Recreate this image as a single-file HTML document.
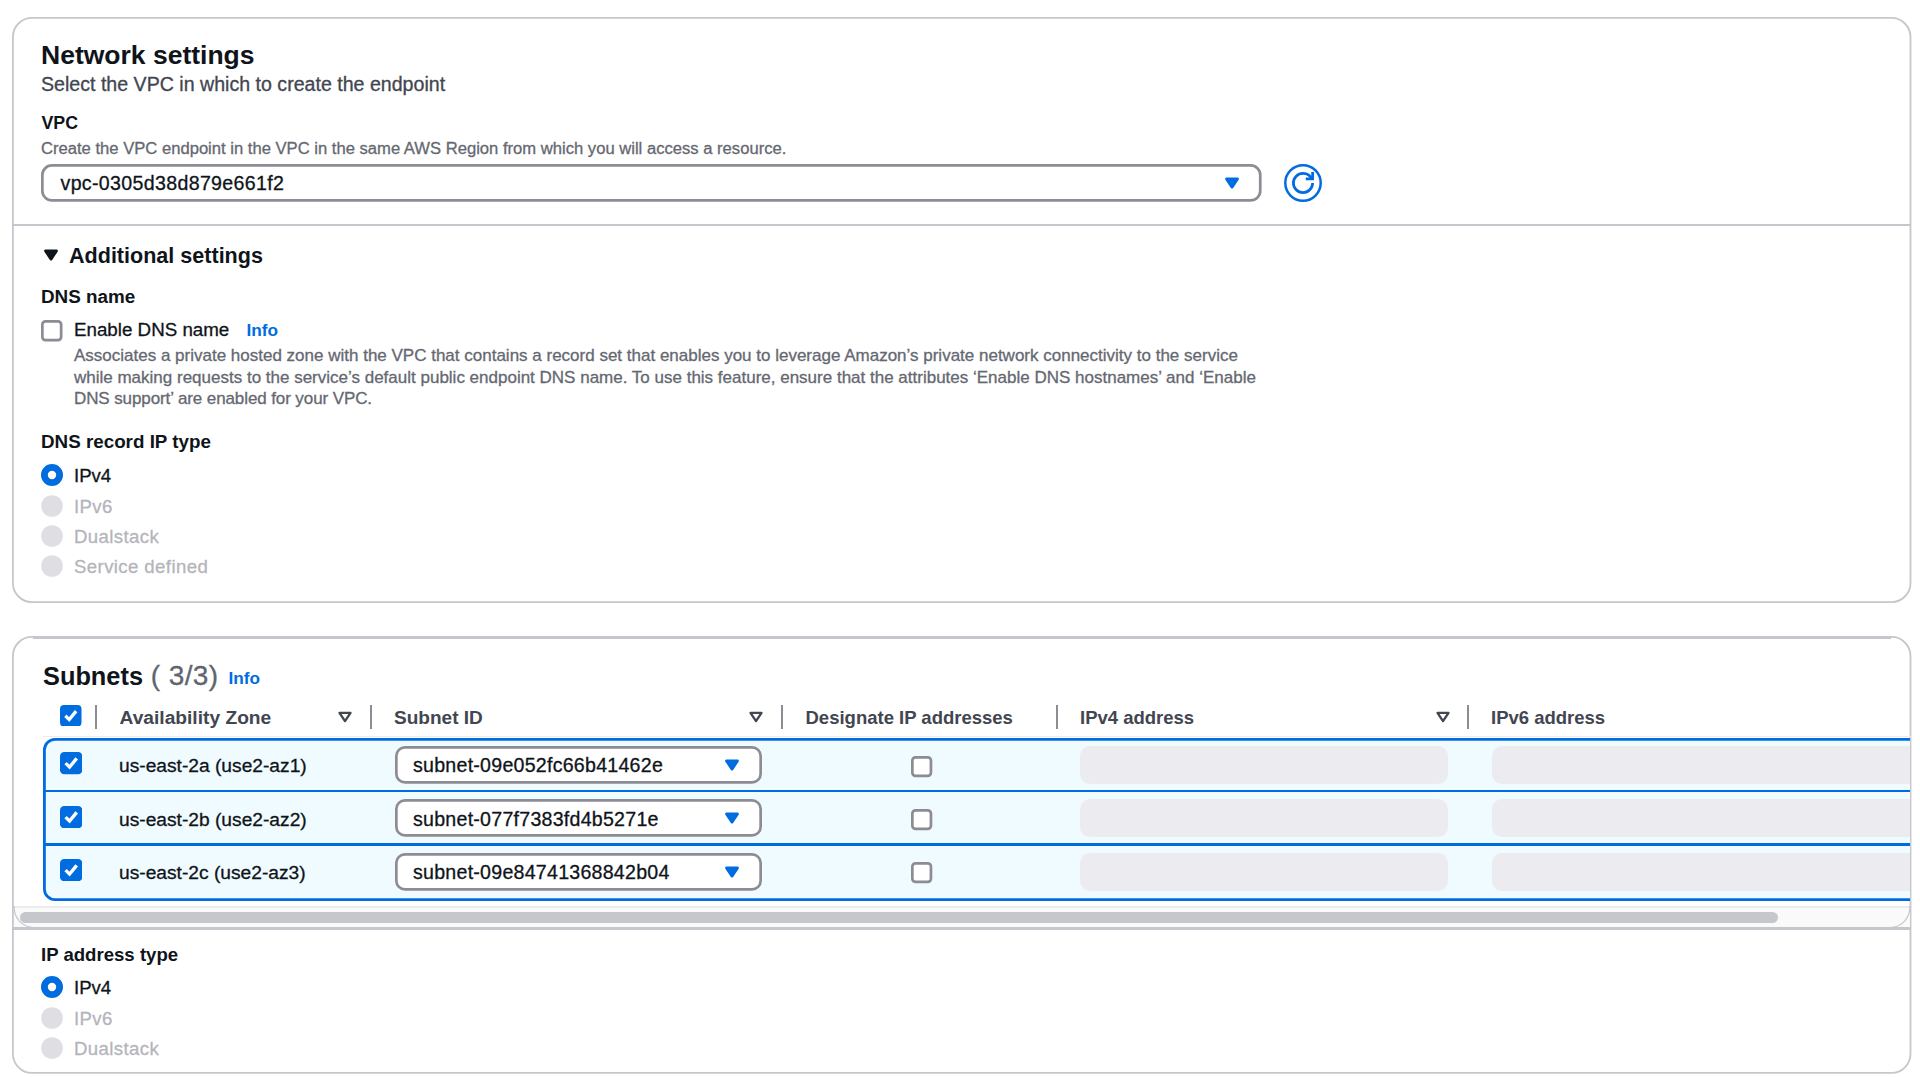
<!DOCTYPE html>
<html><head><meta charset="utf-8"><style>
html,body{margin:0;padding:0;background:#fff;width:1920px;height:1077px;overflow:hidden}
body{position:relative;font-family:"Liberation Sans",sans-serif}
.t{position:absolute;white-space:nowrap}
.b{position:absolute}
</style></head><body>
<svg class="b" style="left:12.3px;top:17px;overflow:visible" width="1899.4" height="586"><rect x="0.9" y="0.9" width="1897.6000000000001" height="584.2" rx="19.1" fill="#fff" stroke="#c6c6cd" stroke-width="1.8"/></svg>
<div class="t" style="left:41px;top:41.57px;font-size:26.5px;line-height:26.5px;font-weight:700;color:#0f141a;">Network settings</div>
<div class="t" style="left:41px;top:75.21px;font-size:19.6px;line-height:19.6px;font-weight:400;color:#424650;-webkit-text-stroke:0.3px currentColor;">Select the VPC in which to create the endpoint</div>
<div class="t" style="left:41.5px;top:115.13px;font-size:17.8px;line-height:17.8px;font-weight:700;color:#0f141a;">VPC</div>
<div class="t" style="left:41px;top:140.52px;font-size:16.63px;line-height:16.63px;font-weight:400;color:#656871;-webkit-text-stroke:0.3px currentColor;">Create the VPC endpoint in the VPC in the same AWS Region from which you will access a resource.</div>
<svg class="b" style="left:41.2px;top:164px;overflow:visible" width="1220.6" height="37.8"><rect x="1.35" y="1.35" width="1217.8999999999999" height="35.099999999999994" rx="9.65" fill="#fff" stroke="#8c8c94" stroke-width="2.7"/></svg>
<div class="t" style="left:60.5px;top:173.51px;font-size:19.6px;line-height:19.6px;font-weight:400;color:#0f141a;letter-spacing:0.33px;-webkit-text-stroke:0.3px currentColor;">vpc-0305d38d879e661f2</div>
<svg class="b" style="left:1221.00px;top:172.00px" width="22.00" height="22.00" viewBox="0 0 16 16"><path d="M4 5h8l-4 6-4-6z" fill="#006ce0" stroke="#006ce0" stroke-width="2" stroke-linejoin="round"/></svg>
<svg class="b" style="left:1280px;top:160px" width="46" height="46" viewBox="1280 160 46 46"><circle cx="1303" cy="183" r="17.7" fill="none" stroke="#006ce0" stroke-width="2.5"/><g transform="translate(1292,172) scale(1.375)"><path d="M10 5h5V0" fill="none" stroke="#006ce0" stroke-width="2"/><path d="M15 8a6.99 6.99 0 0 1-7 7 6.99 6.99 0 0 1-7-7 6.99 6.99 0 0 1 7-7 6.876 6.876 0 0 1 6.41 4.17" fill="none" stroke="#006ce0" stroke-width="2"/></g></svg>
<div class="b" style="left:13px;top:224px;width:1898px;height:2px;background:#c6c6cd"></div>
<svg class="b" style="left:40px;top:244px" width="22" height="22" viewBox="0 0 16 16"><path d="M4 5h8l-4 6-4-6z" fill="#0f141a" stroke="#0f141a" stroke-width="2" stroke-linejoin="round"/></svg>
<div class="t" style="left:69px;top:245.06px;font-size:21.55px;line-height:21.55px;font-weight:700;color:#0f141a;">Additional settings</div>
<div class="t" style="left:41px;top:288.33px;font-size:18.87px;line-height:18.87px;font-weight:700;color:#0f141a;">DNS name</div>
<svg class="b" style="left:41px;top:319.5px;overflow:visible" width="21.5" height="21.5"><rect x="1.35" y="1.35" width="18.8" height="18.8" rx="3.15" fill="#fff" stroke="#8c8c94" stroke-width="2.7"/></svg>
<div class="t" style="left:74px;top:320.73px;font-size:18.75px;line-height:18.75px;font-weight:400;color:#0f141a;-webkit-text-stroke:0.3px currentColor;">Enable DNS name</div>
<div class="t" style="left:246.5px;top:322.44px;font-size:17.2px;line-height:17.2px;font-weight:700;color:#006ce0;">Info</div>
<div class="t" style="left:74px;top:346.91px;font-size:17.0px;line-height:17.0px;font-weight:400;color:#656871;-webkit-text-stroke:0.3px currentColor;">Associates a private hosted zone with the VPC that contains a record set that enables you to leverage Amazon’s private network connectivity to the service</div>
<div class="t" style="left:74px;top:368.61px;font-size:17.0px;line-height:17.0px;font-weight:400;color:#656871;-webkit-text-stroke:0.3px currentColor;">while making requests to the service’s default public endpoint DNS name. To use this feature, ensure that the attributes ‘Enable DNS hostnames’ and ‘Enable</div>
<div class="t" style="left:74px;top:390.31px;font-size:17.0px;line-height:17.0px;font-weight:400;color:#656871;letter-spacing:-0.1px;-webkit-text-stroke:0.3px currentColor;">DNS support’ are enabled for your VPC.</div>
<div class="t" style="left:41px;top:432.68px;font-size:18.81px;line-height:18.81px;font-weight:700;color:#0f141a;">DNS record IP type</div>
<svg class="b" style="left:41px;top:464.2px" width="22" height="22" viewBox="0 0 22 22"><circle cx="11" cy="11" r="7.6" fill="#fff" stroke="#006ce0" stroke-width="6.8"/></svg>
<div class="t" style="left:74px;top:467.26px;font-size:18.6px;line-height:18.6px;font-weight:400;color:#0f141a;-webkit-text-stroke:0.3px currentColor;">IPv4</div>
<svg class="b" style="left:41px;top:494.5px" width="22" height="22" viewBox="0 0 22 22"><circle cx="11" cy="11" r="10.8" fill="#dedee3"/></svg>
<div class="t" style="left:74px;top:497.56px;font-size:18.6px;line-height:18.6px;font-weight:400;color:#b4b4bb;letter-spacing:0.4px;-webkit-text-stroke:0.3px currentColor;">IPv6</div>
<svg class="b" style="left:41px;top:524.8px" width="22" height="22" viewBox="0 0 22 22"><circle cx="11" cy="11" r="10.8" fill="#dedee3"/></svg>
<div class="t" style="left:74px;top:527.86px;font-size:18.6px;line-height:18.6px;font-weight:400;color:#b4b4bb;letter-spacing:0.4px;-webkit-text-stroke:0.3px currentColor;">Dualstack</div>
<svg class="b" style="left:41px;top:555.1px" width="22" height="22" viewBox="0 0 22 22"><circle cx="11" cy="11" r="10.8" fill="#dedee3"/></svg>
<div class="t" style="left:74px;top:558.16px;font-size:18.6px;line-height:18.6px;font-weight:400;color:#b4b4bb;letter-spacing:0.4px;-webkit-text-stroke:0.3px currentColor;">Service defined</div>
<svg class="b" style="left:12.3px;top:636.2px;overflow:visible" width="1899.4" height="437.8"><rect x="0.9" y="0.9" width="1897.6000000000001" height="436.0" rx="19.1" fill="#fff" stroke="#c6c6cd" stroke-width="1.8"/></svg>
<div class="b" style="left:33px;top:636.2px;width:1858px;height:2.8px;background:#c6c6cd"></div>
<div class="t" style="left:43px;top:663.84px;font-size:25.35px;line-height:25.35px;font-weight:700;color:#0f141a;">Subnets</div>
<div class="t" style="left:150.8px;top:661.50px;font-size:28px;line-height:28px;font-weight:400;color:#5f6570;letter-spacing:0.4px;-webkit-text-stroke:0.3px currentColor;">( 3/3)</div>
<div class="t" style="left:228.5px;top:670.44px;font-size:17.2px;line-height:17.2px;font-weight:700;color:#006ce0;">Info</div>
<svg class="b" style="left:60px;top:704.5px" width="21.5" height="21.5" viewBox="0 0 14 14"><rect x="0" y="0" width="14" height="14" rx="2.6" fill="#006ce0"/><polyline points="3.5,7 6,9.5 10.5,4" fill="none" stroke="#fff" stroke-width="2.1"/></svg>
<div class="b" style="left:95px;top:704.5px;width:2.4px;height:24.5px;background:#8c8c94"></div>
<div class="b" style="left:370px;top:704.5px;width:2.4px;height:24.5px;background:#8c8c94"></div>
<div class="b" style="left:781px;top:704.5px;width:2.4px;height:24.5px;background:#8c8c94"></div>
<div class="b" style="left:1055.5px;top:704.5px;width:2.4px;height:24.5px;background:#8c8c94"></div>
<div class="b" style="left:1467px;top:704.5px;width:2.4px;height:24.5px;background:#8c8c94"></div>
<div class="t" style="left:119.5px;top:707.95px;font-size:19.2px;line-height:19.2px;font-weight:700;color:#424650;">Availability Zone</div>
<svg class="b" style="left:333.50px;top:706.00px" width="22.00" height="22.00" viewBox="0 0 16 16"><path d="M4 5h8l-4 6-4-6z" fill="none" stroke="#424650" stroke-width="1.7" stroke-linejoin="round"/></svg>
<div class="t" style="left:394px;top:708.08px;font-size:19.04px;line-height:19.04px;font-weight:700;color:#424650;">Subnet ID</div>
<svg class="b" style="left:745.00px;top:706.00px" width="22.00" height="22.00" viewBox="0 0 16 16"><path d="M4 5h8l-4 6-4-6z" fill="none" stroke="#424650" stroke-width="1.7" stroke-linejoin="round"/></svg>
<div class="t" style="left:805.5px;top:708.54px;font-size:18.5px;line-height:18.5px;font-weight:700;color:#424650;">Designate IP addresses</div>
<div class="t" style="left:1080px;top:708.54px;font-size:18.5px;line-height:18.5px;font-weight:700;color:#424650;">IPv4 address</div>
<svg class="b" style="left:1431.50px;top:706.00px" width="22.00" height="22.00" viewBox="0 0 16 16"><path d="M4 5h8l-4 6-4-6z" fill="none" stroke="#424650" stroke-width="1.7" stroke-linejoin="round"/></svg>
<div class="t" style="left:1491px;top:708.54px;font-size:18.5px;line-height:18.5px;font-weight:700;color:#424650;">IPv6 address</div>
<div class="b" style="left:43px;top:735.5px;width:1868px;height:1.5px;background:#ebebf0"></div>
<div class="b" style="left:14px;top:636px;width:1896px;height:300px;overflow:hidden">
<svg class="b" style="left:29px;top:101.79999999999995px;overflow:visible" width="1960" height="163"><rect x="1.4" y="1.4" width="1957.2" height="160.2" rx="10.6" fill="#f0fbff" stroke="#006ce0" stroke-width="2.8"/></svg>
<svg class="b" style="left:45.6px;top:116.39999999999998px" width="22.3" height="22.3" viewBox="0 0 14 14"><rect x="0" y="0" width="14" height="14" rx="2.6" fill="#006ce0"/><polyline points="3.5,7 6,9.5 10.5,4" fill="none" stroke="#fff" stroke-width="2.1"/></svg>
<div class="t" style="left:105px;top:120.25px;font-size:19.2px;line-height:19.2px;font-weight:400;color:#0f141a;-webkit-text-stroke:0.3px currentColor;">us-east-2a (use2-az1)</div>
<svg class="b" style="left:380.5px;top:110px;overflow:visible" width="367" height="37.8"><rect x="1.35" y="1.35" width="364.3" height="35.099999999999994" rx="8.65" fill="#fff" stroke="#8c8c94" stroke-width="2.7"/></svg>
<div class="t" style="left:399px;top:120.21px;font-size:19.6px;line-height:19.6px;font-weight:400;color:#0f141a;letter-spacing:0.25px;-webkit-text-stroke:0.3px currentColor;">subnet-09e052fc66b41462e</div>
<svg class="b" style="left:706.50px;top:118.00px" width="22.00" height="22.00" viewBox="0 0 16 16"><path d="M4 5h8l-4 6-4-6z" fill="#006ce0" stroke="#006ce0" stroke-width="2" stroke-linejoin="round"/></svg>
<svg class="b" style="left:896.5px;top:119.79999999999995px;overflow:visible" width="21.3" height="21.3"><rect x="1.35" y="1.35" width="18.6" height="18.6" rx="3.15" fill="#fff" stroke="#8c8c94" stroke-width="2.7"/></svg>
<div class="b" style="left:1066px;top:110px;width:368px;height:38px;background:#ebebf0;border-radius:10px"></div>
<div class="b" style="left:1477.5px;top:110px;width:500px;height:38px;background:#ebebf0;border-radius:10px"></div>
<div class="b" style="left:29px;top:153.60000000000002px;width:1960px;height:2.8px;background:#006ce0"></div>
<svg class="b" style="left:45.6px;top:169.69999999999993px" width="22.3" height="22.3" viewBox="0 0 14 14"><rect x="0" y="0" width="14" height="14" rx="2.6" fill="#006ce0"/><polyline points="3.5,7 6,9.5 10.5,4" fill="none" stroke="#fff" stroke-width="2.1"/></svg>
<div class="t" style="left:105px;top:173.55px;font-size:19.2px;line-height:19.2px;font-weight:400;color:#0f141a;-webkit-text-stroke:0.3px currentColor;">us-east-2b (use2-az2)</div>
<svg class="b" style="left:380.5px;top:163.29999999999995px;overflow:visible" width="367" height="37.8"><rect x="1.35" y="1.35" width="364.3" height="35.099999999999994" rx="8.65" fill="#fff" stroke="#8c8c94" stroke-width="2.7"/></svg>
<div class="t" style="left:399px;top:173.51px;font-size:19.6px;line-height:19.6px;font-weight:400;color:#0f141a;letter-spacing:0.25px;-webkit-text-stroke:0.3px currentColor;">subnet-077f7383fd4b5271e</div>
<svg class="b" style="left:706.50px;top:171.30px" width="22.00" height="22.00" viewBox="0 0 16 16"><path d="M4 5h8l-4 6-4-6z" fill="#006ce0" stroke="#006ce0" stroke-width="2" stroke-linejoin="round"/></svg>
<svg class="b" style="left:896.5px;top:173.0999999999999px;overflow:visible" width="21.3" height="21.3"><rect x="1.35" y="1.35" width="18.6" height="18.6" rx="3.15" fill="#fff" stroke="#8c8c94" stroke-width="2.7"/></svg>
<div class="b" style="left:1066px;top:163.29999999999995px;width:368px;height:38px;background:#ebebf0;border-radius:10px"></div>
<div class="b" style="left:1477.5px;top:163.29999999999995px;width:500px;height:38px;background:#ebebf0;border-radius:10px"></div>
<div class="b" style="left:29px;top:207.10000000000002px;width:1960px;height:2.8px;background:#006ce0"></div>
<svg class="b" style="left:45.6px;top:223.0px" width="22.3" height="22.3" viewBox="0 0 14 14"><rect x="0" y="0" width="14" height="14" rx="2.6" fill="#006ce0"/><polyline points="3.5,7 6,9.5 10.5,4" fill="none" stroke="#fff" stroke-width="2.1"/></svg>
<div class="t" style="left:105px;top:226.85px;font-size:19.2px;line-height:19.2px;font-weight:400;color:#0f141a;-webkit-text-stroke:0.3px currentColor;">us-east-2c (use2-az3)</div>
<svg class="b" style="left:380.5px;top:216.60000000000002px;overflow:visible" width="367" height="37.8"><rect x="1.35" y="1.35" width="364.3" height="35.099999999999994" rx="8.65" fill="#fff" stroke="#8c8c94" stroke-width="2.7"/></svg>
<div class="t" style="left:399px;top:226.81px;font-size:19.6px;line-height:19.6px;font-weight:400;color:#0f141a;letter-spacing:0.25px;-webkit-text-stroke:0.3px currentColor;">subnet-09e84741368842b04</div>
<svg class="b" style="left:706.50px;top:224.60px" width="22.00" height="22.00" viewBox="0 0 16 16"><path d="M4 5h8l-4 6-4-6z" fill="#006ce0" stroke="#006ce0" stroke-width="2" stroke-linejoin="round"/></svg>
<svg class="b" style="left:896.5px;top:226.39999999999998px;overflow:visible" width="21.3" height="21.3"><rect x="1.35" y="1.35" width="18.6" height="18.6" rx="3.15" fill="#fff" stroke="#8c8c94" stroke-width="2.7"/></svg>
<div class="b" style="left:1066px;top:216.60000000000002px;width:368px;height:38px;background:#ebebf0;border-radius:10px"></div>
<div class="b" style="left:1477.5px;top:216.60000000000002px;width:500px;height:38px;background:#ebebf0;border-radius:10px"></div>
</div>
<div class="b" style="left:14px;top:906px;width:1896px;height:2px;background:#ebebf0"></div>
<div class="b" style="left:14px;top:908px;width:1896px;height:19.5px;background:#fafafb"></div>
<div class="b" style="left:19.5px;top:911.8px;width:1758px;height:11px;background:#c6c6cd;border-radius:6px"></div>
<div class="b" style="left:13px;top:927.3px;width:1898px;height:2.6px;background:#c6c6cd"></div>
<svg class="b" style="left:0;top:890px" width="60" height="50"><path d="M14.2 16 A20 20 0 0 0 34 37.5" fill="none" stroke="#c6c6cd" stroke-width="1.2"/></svg>
<svg class="b" style="left:1860px;top:890px" width="60" height="50"><path d="M49.8 16 A20 20 0 0 1 30 37.5" fill="none" stroke="#c6c6cd" stroke-width="1.2"/></svg>
<div class="t" style="left:41px;top:946.06px;font-size:18.6px;line-height:18.6px;font-weight:700;color:#0f141a;">IP address type</div>
<svg class="b" style="left:41px;top:976.2px" width="22" height="22" viewBox="0 0 22 22"><circle cx="11" cy="11" r="7.6" fill="#fff" stroke="#006ce0" stroke-width="6.8"/></svg>
<div class="t" style="left:74px;top:979.26px;font-size:18.6px;line-height:18.6px;font-weight:400;color:#0f141a;-webkit-text-stroke:0.3px currentColor;">IPv4</div>
<svg class="b" style="left:41px;top:1006.5px" width="22" height="22" viewBox="0 0 22 22"><circle cx="11" cy="11" r="10.8" fill="#dedee3"/></svg>
<div class="t" style="left:74px;top:1009.56px;font-size:18.6px;line-height:18.6px;font-weight:400;color:#b4b4bb;letter-spacing:0.4px;-webkit-text-stroke:0.3px currentColor;">IPv6</div>
<svg class="b" style="left:41px;top:1036.8px" width="22" height="22" viewBox="0 0 22 22"><circle cx="11" cy="11" r="10.8" fill="#dedee3"/></svg>
<div class="t" style="left:74px;top:1039.86px;font-size:18.6px;line-height:18.6px;font-weight:400;color:#b4b4bb;letter-spacing:0.4px;-webkit-text-stroke:0.3px currentColor;">Dualstack</div>
</body></html>
